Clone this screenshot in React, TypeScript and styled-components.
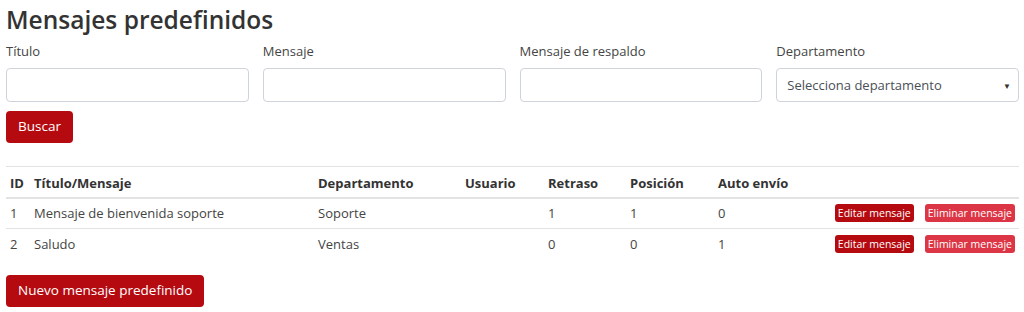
import React from "react";
import styled, { createGlobalStyle } from "styled-components";

const Global = createGlobalStyle`
  html, body { margin: 0; padding: 0; background: #fff; }
  body {
    font-family: "Open Sans", "Noto Sans", sans-serif;
    color: #212529;
    font-size: 14px;
  }
  * { box-sizing: border-box; }
`;

const Page = styled.div`
  padding: 4px 5px 0 6px;
`;

const Title = styled.h3`
  margin: 0 0 6px;
  font-size: 24.5px;
  font-weight: 600;
  line-height: 32px;
  color: #333;
`;

const FilterGrid = styled.div`
  display: grid;
  grid-template-columns: repeat(4, 1fr);
  column-gap: 14px;
`;

const Field = styled.div`
  display: flex;
  flex-direction: column;
`;

const Label = styled.label`
  font-size: 13px;
  color: #444;
  line-height: 18px;
  margin-bottom: 8px;
`;

const Input = styled.input`
  height: 34px;
  border: 1px solid #ced4da;
  border-radius: 4px;
  padding: 0 10px;
  font: inherit;
`;

const SelectBox = styled.div`
  position: relative;
  height: 34px;
  border: 1px solid #ced4da;
  border-radius: 4px;
  padding: 0 10px;
  display: flex;
  align-items: center;
  font-size: 13px;
  color: #495057;
`;

const Caret = styled.span`
  position: absolute;
  right: 7px;
  top: 11px;
  font-size: 8px;
  color: #333;
`;

const Button = styled.button<{ $small?: boolean; $light?: boolean }>`
  background: ${(p) => (p.$light ? "#dc3545" : "#b50a10")};
  color: #fff;
  border: none;
  border-radius: ${(p) => (p.$small ? "3px" : "4px")};
  font-family: inherit;
  font-size: ${(p) => (p.$small ? "10.5px" : "13.5px")};
  height: ${(p) => (p.$small ? "18px" : "32px")};
  padding: ${(p) => (p.$small ? "0 3px" : "0 12px")};
  line-height: 1;
  white-space: nowrap;
  cursor: pointer;
`;

const SearchRow = styled.div`
  margin-top: 9px;
`;

const Table = styled.table`
  margin-top: 23px;
  width: 100%;
  border-collapse: collapse;
  table-layout: fixed;
  font-size: 13px;
`;

const Th = styled.th`
  text-align: left;
  font-weight: 700;
  color: #333;
  border-top: 1px solid #e3e3e3;
  border-bottom: 2px solid #e3e3e3;
  height: 31px;
  padding: 2px 4px 0;
`;

const Td = styled.td<{ $last?: boolean }>`
  color: #444;
  height: 31px;
  padding: 0 4px;
  border-bottom: ${(p) => (p.$last ? "none" : "1px solid #e3e3e3")};
`;

const Actions = styled.div`
  display: flex;
  justify-content: flex-end;
  gap: 11px;
`;

const Footer = styled.div`
  margin-top: 15px;
`;

const rows = [
  { id: 1, title: "Mensaje de bienvenida soporte", dep: "Soporte", user: "", delay: 1, pos: 1, auto: 0 },
  { id: 2, title: "Saludo", dep: "Ventas", user: "", delay: 0, pos: 0, auto: 1 },
];

export default function App() {
  return (
    <Page>
      <Global />
      <Title>Mensajes predefinidos</Title>
      <FilterGrid>
        <Field>
          <Label>Título</Label>
          <Input />
        </Field>
        <Field>
          <Label>Mensaje</Label>
          <Input />
        </Field>
        <Field>
          <Label>Mensaje de respaldo</Label>
          <Input />
        </Field>
        <Field>
          <Label>Departamento</Label>
          <SelectBox>
            Selecciona departamento
            <Caret>▼</Caret>
          </SelectBox>
        </Field>
      </FilterGrid>
      <SearchRow>
        <Button>Buscar</Button>
      </SearchRow>
      <Table>
        <colgroup>
          <col style={{ width: 24 }} />
          <col style={{ width: 284 }} />
          <col style={{ width: 147 }} />
          <col style={{ width: 83 }} />
          <col style={{ width: 82 }} />
          <col style={{ width: 88 }} />
          <col style={{ width: 110 }} />
          <col />
        </colgroup>
        <thead>
          <tr>
            <Th>ID</Th>
            <Th>Título/Mensaje</Th>
            <Th>Departamento</Th>
            <Th>Usuario</Th>
            <Th>Retraso</Th>
            <Th>Posición</Th>
            <Th>Auto envío</Th>
            <Th />
          </tr>
        </thead>
        <tbody>
          {rows.map((r, i) => {
            const last = i === rows.length - 1;
            return (
              <tr key={r.id}>
                <Td $last={last}>{r.id}</Td>
                <Td $last={last}>{r.title}</Td>
                <Td $last={last}>{r.dep}</Td>
                <Td $last={last}>{r.user}</Td>
                <Td $last={last}>{r.delay}</Td>
                <Td $last={last}>{r.pos}</Td>
                <Td $last={last}>{r.auto}</Td>
                <Td $last={last}>
                  <Actions>
                    <Button $small>Editar mensaje</Button>
                    <Button $small $light>Eliminar mensaje</Button>
                  </Actions>
                </Td>
              </tr>
            );
          })}
        </tbody>
      </Table>
      <Footer>
        <Button>Nuevo mensaje predefinido</Button>
      </Footer>
    </Page>
  );
}
